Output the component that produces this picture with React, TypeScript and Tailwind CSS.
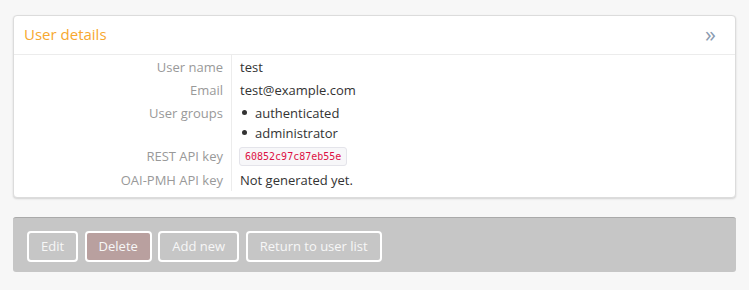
export default function App() {
  const rows: { label: string; value: React.ReactNode }[] = [
    { label: "User name", value: "test" },
    { label: "Email", value: "test@example.com" },
  ];

  return (
    <div className="min-h-[290px] bg-[#f7f7f7] pt-[15px] px-[13px] font-['Open_Sans',sans-serif] text-[13px]">
      <div className="bg-white border border-[#dcdcdc] rounded-[4px] shadow-[0_1px_2px_rgba(0,0,0,0.15)]">
        <div className="h-[39px] flex items-center justify-between pl-[10px] pr-[19px] border-b border-[#ececec]">
          <span className="text-[15px] text-[#f7a82f] -mt-[1px]">User details</span>
          <span className="text-[22px] leading-none text-[#8b9bb0] -mt-[5px]">»</span>
        </div>
        <div className="grid grid-cols-[218px_1fr] pb-[6px]">
          {rows.map((r) => (
            <Row key={r.label} label={r.label}>
              {r.value}
            </Row>
          ))}
          <Row label="User groups">
            <ul>
              {["authenticated", "administrator"].map((g) => (
                <li key={g} className="flex items-center">
                  <span className="w-[5px] h-[5px] rounded-full bg-[#333] mr-[8px] ml-[2px]" />
                  {g}
                </li>
              ))}
            </ul>
          </Row>
          <div className="text-right text-[#999] pr-[8px] border-r border-[#ececec] leading-[20px] flex items-center justify-end">
            REST API key
          </div>
          <div className="pl-[7px] py-[2px]">
            <code className="inline-block bg-[#f7f7f9] border border-[#e4e4ea] rounded-[3px] px-[5px] h-[19px] leading-[17px] text-[10px] text-[#dd1144] font-['DejaVu_Sans_Mono',monospace]">
              60852c97c87eb55e
            </code>
          </div>
          <Row label="OAI-PMH API key">Not generated yet.</Row>
        </div>
      </div>

      <div className="mt-[19px] bg-[#c6c6c6] border-t border-[#aaaaaa] rounded-[3px] h-[55px] flex items-start gap-[6.5px] pl-[14px] pt-[13px]">
        <Btn>Edit</Btn>
        <Btn red>Delete</Btn>
        <Btn>Add new</Btn>
        <Btn>Return to user list</Btn>
      </div>
    </div>
  );
}

function Row({ label, children }: { label: string; children: React.ReactNode }) {
  return (
    <>
      <div className="text-right text-[#999] pr-[8px] border-r border-[#ececec] leading-[20px] py-[1.5px]">
        {label}
      </div>
      <div className="pl-[8px] text-[#333] leading-[20px] py-[1.5px]">{children}</div>
    </>
  );
}

function Btn({ children, red }: { children: React.ReactNode; red?: boolean }) {
  return (
    <button
      type="button"
      className={
        red
          ? "h-[31px] px-[12px] border-2 border-white rounded-[4px] bg-[#b9a09f] text-[#f7f7f7] text-[13px]"
          : "h-[31px] px-[12px] border-2 border-white rounded-[4px] bg-transparent text-[#f7f7f7] text-[13px]"
      }
    >
      {children}
    </button>
  );
}
